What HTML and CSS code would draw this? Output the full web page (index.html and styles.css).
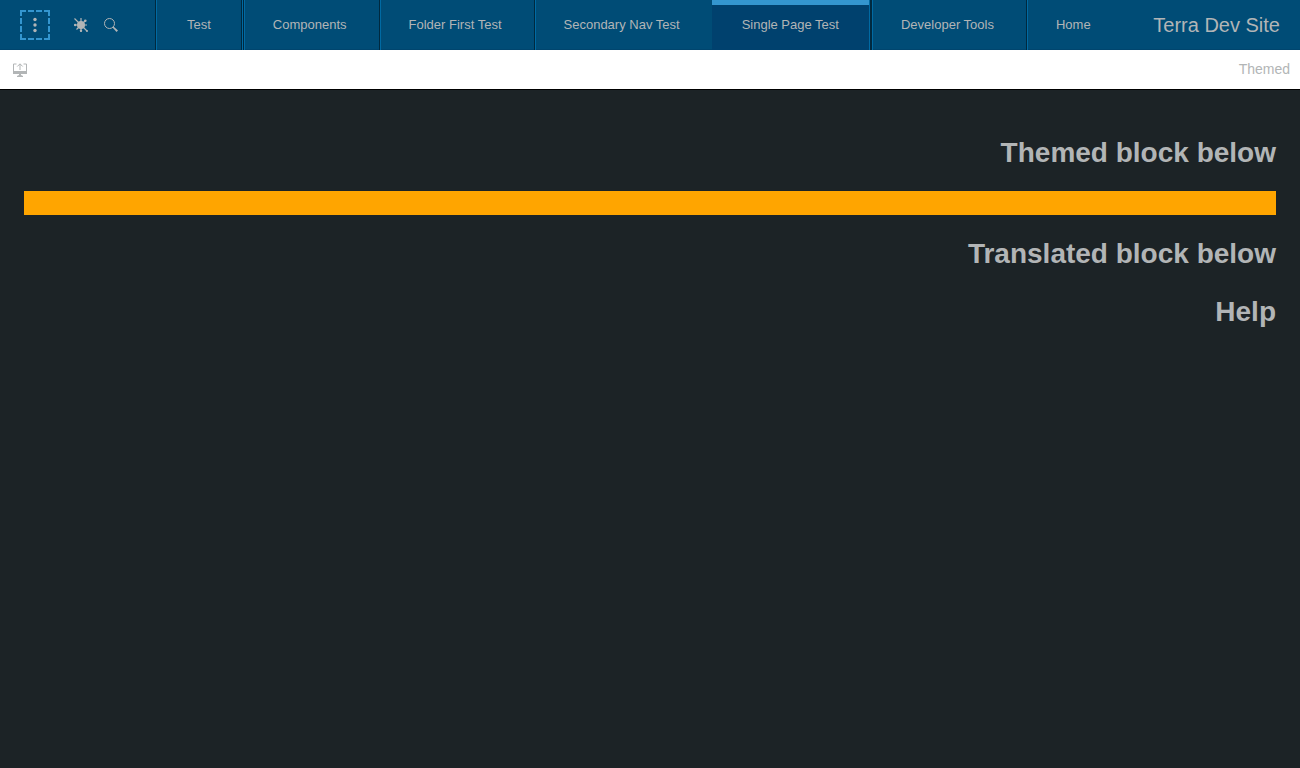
FILE: index.html
```html
<!DOCTYPE html>
<html lang="en">
<head>
<meta charset="utf-8">
<title>Terra Dev Site</title>
<link rel="stylesheet" href="styles.css">
</head>
<body>
<header class="header">
  <div class="utilities">
    <button class="icon-button focused" type="button" aria-label="Menu">
      <svg class="icon" viewBox="0 0 14 14"><circle cx="7" cy="1.500" r="1.700"/><circle cx="7" cy="7" r="1.700"/><circle cx="7" cy="12.500" r="1.700"/></svg>
    </button>
    <button class="icon-button extension" type="button" aria-label="Report a bug">
      <svg class="icon" viewBox="0 0 14 14"><circle cx="7" cy="7" r="4"/><path class="line" d="M7 7V0M7 7v7M7 7H0M7 7h6M7 7L.5 .5M7 7l4.500-4.500M7 7l6 6M7 7l-4.500 4.500"/><circle cx="7" cy="12.800" r="1.200"/><circle cx="1.200" cy="7" r="1.200"/><circle cx="11.300" cy="2.700" r="1.300"/><circle cx="13" cy="13" r="1"/></svg>
    </button>
    <button class="icon-button" type="button" aria-label="Search">
      <svg class="icon" viewBox="0 0 14 14"><circle class="line" cx="5.500" cy="5.500" r="5"/><path d="M8.500 9.500l1-1 4.500 4-1.500 1.500z"/></svg>
    </button>
  </div>
  <nav class="tabs">
    <a class="tab" href="#test">Test</a>
    <a class="tab" href="#components">Components</a>
    <a class="tab" href="#folder">Folder First Test</a>
    <a class="tab" href="#secondary">Secondary Nav Test</a>
    <a class="tab active" href="#single" aria-current="page">Single Page Test</a>
    <a class="tab" href="#developer">Developer Tools</a>
    <a class="tab" href="#home">Home</a>
  </nav>
  <div class="site-title">Terra Dev Site</div>
</header>
<div class="toolbar">
  <button class="toolbar-button" type="button" aria-label="Open in modal">
    <svg class="icon" viewBox="0 0 14 14"><path d="M0 8h14v3H0zM6 11h2v1l2 1v1H4v-1l2-1z"/><path class="line" d="M3.500 1H.5V9M10.500 1h3V9M7 7V1M4.300 3.500L7 .8l2.700 2.700"/></svg>
  </button>
  <span class="toolbar-title">Themed</span>
</div>
<main class="content">
  <h1 class="heading">Themed block below</h1>
  <div class="themed-block"></div>
  <h1 class="heading">Translated block below</h1>
  <h1 class="heading">Help</h1>
</main>
</body>
</html>
```
FILE: styles.css
```css
* {
  box-sizing: border-box;
}

body {
  margin: 0;
  min-height: 100vh;
  display: flex;
  flex-direction: column;
  background: #1c2326;
  color: #b2b5b6;
  font-family: "Liberation Sans", Arial, sans-serif;
  font-size: 14px;
}

.header {
  display: flex;
  align-items: stretch;
  justify-content: space-between;
  height: 50px;
  padding: 0 20px;
  background: #004c76;
  box-shadow: inset 0 -1px #00456e;
}

.utilities {
  display: flex;
  align-items: center;
}

.icon-button,
.toolbar-button {
  display: flex;
  align-items: center;
  justify-content: center;
  width: 30px;
  height: 30px;
  padding: 0;
  border: 0;
  background: none;
  color: inherit;
}

.focused {
  border: 2px dashed #3496cf;
}

.extension {
  margin-left: 16px;
}

.icon {
  display: block;
  width: 14px;
  height: 14px;
  fill: currentColor;
  overflow: visible;
}

.icon .line {
  fill: none;
  stroke: currentColor;
  stroke-width: 1;
}

.extension .line {
  stroke-width: 1.2;
}

.tabs {
  display: flex;
  margin-left: 29px;
  margin-right: auto;
  font-size: 13px;
}

.tab {
  display: flex;
  align-items: center;
  padding: 0 32px 2px 29px;
  border-left: 1px solid #00293f;
  box-shadow: inset 1px 0 #006aa3;
  color: inherit;
  text-decoration: none;
}

.tab:first-child {
  padding-left: 31px;
  padding-right: 30px;
  margin-right: 1px;
  border-right: 1px solid #00293f;
  box-shadow: inset 1px 0 #006aa3, 1px 0 #006aa3;
}

.tab.active {
  padding-left: 30px;
  padding-right: 31px;
  border-left: 0;
  border-right: 1px solid #00293f;
  background: #00416e;
  box-shadow: inset -1px 0 #006aa3, inset 0 5px #3496cf;
}

.site-title {
  align-self: center;
  font-size: 20px;
}

.toolbar {
  display: flex;
  align-items: center;
  justify-content: space-between;
  height: 40px;
  padding: 0 10px 0 5px;
  background: #fff;
  border-bottom: 1px solid #000;
}

.toolbar-title {
  padding-bottom: 2px;
}

.content {
  flex: 1;
  padding: 24px;
  text-align: right;
}

.heading {
  margin: 19px 0;
  font-size: 28px;
  line-height: 39px;
}

.themed-block {
  height: 24px;
  background: #ffa500;
}
```
